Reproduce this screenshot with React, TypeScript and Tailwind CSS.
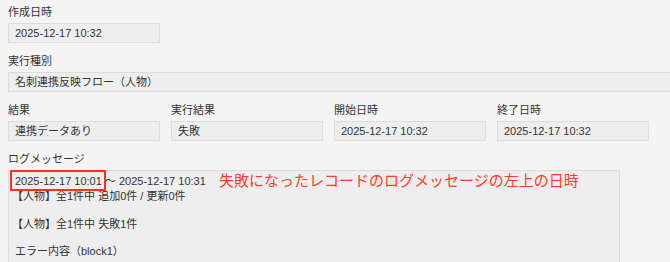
import React from "react";

const font = { fontFamily: '"Liberation Sans", "Noto Sans CJK JP", sans-serif' };

function Label({ children }: { children: React.ReactNode }) {
  return <div className="h-[14px] text-[11px] leading-[14px] text-[#333] mb-[4px]">{children}</div>;
}

function Field({ children, className = "" }: { children: React.ReactNode; className?: string }) {
  return (
    <div
      className={`h-[20px] border border-[#dcdcdc] bg-[#eeeeee] pl-[6px] text-[11px] leading-[18px] text-[#333] whitespace-nowrap ${className}`}
    >
      {children}
    </div>
  );
}

export default function App() {
  return (
    <div className="h-[262px] w-[670px] overflow-hidden bg-[#f4f4f4]" style={font}>
      <div className="px-[8px] pt-[5px] flex flex-col">
        <div className="mb-[11px]">
          <Label>作成日時</Label>
          <Field className="w-[152px]">2025-12-17 10:32</Field>
        </div>
        <div className="mb-[11px]">
          <Label>実行種別</Label>
          <Field className="w-[700px]">名刺連携反映フロー（人物）</Field>
        </div>
        <div className="mb-[11px] flex gap-[11px]">
          <div className="w-[152px]">
            <Label>結果</Label>
            <Field>連携データあり</Field>
          </div>
          <div className="w-[152px]">
            <Label>実行結果</Label>
            <Field>失敗</Field>
          </div>
          <div className="w-[152px]">
            <Label>開始日時</Label>
            <Field>2025-12-17 10:32</Field>
          </div>
          <div className="w-[152px]">
            <Label>終了日時</Label>
            <Field>2025-12-17 10:32</Field>
          </div>
        </div>
        <div>
          <Label>ログメッセージ</Label>
          <div className="relative w-[612px] h-[120px] border border-[#dcdcdc] bg-[#eeeeee] pl-[6px] pt-[2px] text-[11px] leading-[13.8px] text-[#333]">
            <div className="relative h-[17px] leading-[17px] whitespace-nowrap">
              <span className="absolute left-[-5px] top-[-3px] w-[96px] h-[21px] border-2 border-[#f5321e]"></span>
              <span>2025-12-17 10:01 ～ 2025-12-17 10:31</span>
              <span className="absolute left-[204px] top-[-1px] text-[15px] leading-[18px] text-[#ff3b2a]">
                失敗になったレコードのログメッセージの左上の日時
              </span>
            </div>
            <div className="whitespace-nowrap -ml-[3px]">【人物】全1件中 追加0件 / 更新0件</div>
            <div className="h-[13.8px]"></div>
            <div className="whitespace-nowrap -ml-[3px]">【人物】全1件中 失敗1件</div>
            <div className="h-[13.8px]"></div>
            <div className="whitespace-nowrap">エラー内容（block1）</div>
            <div className="whitespace-nowrap pl-[298px] mt-[5px] text-[#999]">lookup field: Id, Name, Title ... 人物 - 更新失敗</div>
          </div>
        </div>
      </div>
    </div>
  );
}
